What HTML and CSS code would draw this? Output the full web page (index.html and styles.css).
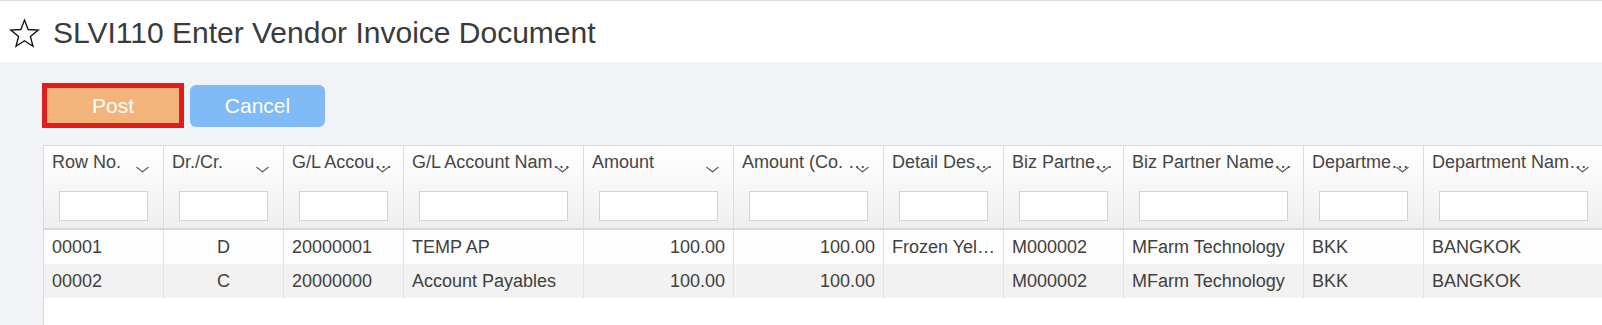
FILE: index.html
```html
<!doctype html>
<html>
<head>
<meta charset="utf-8">
<title>SLVI110 Enter Vendor Invoice Document</title>
<link rel="stylesheet" href="styles.css">
</head>
<body>
<div class="topbar">
  <svg class="star" width="31" height="31" viewBox="0 0 30 30">
    <polygon points="15,2 18.53,11.15 28.31,11.67 20.71,17.85 23.23,27.33 15,22 6.77,27.33 9.29,17.85 1.69,11.67 11.47,11.15" fill="none" stroke="#111" stroke-width="1.3" stroke-linejoin="miter"/>
  </svg>
  <h1>SLVI110 Enter Vendor Invoice Document</h1>
</div>
<div id="content">
  <div class="toolbar">
    <button class="btn btn-post">Post</button>
    <button class="btn btn-cancel">Cancel</button>
  </div>
  <div class="grid">
    <table>
      <colgroup>
        <col style="width:120px"><col style="width:120px"><col style="width:120px">
        <col style="width:180px"><col style="width:150px"><col style="width:150px">
        <col style="width:120px"><col style="width:120px"><col style="width:180px">
        <col style="width:120px"><col style="width:180px">
      </colgroup>
      <thead>
        <tr>
          <th><div class="label">Row No.</div><i class="caret"></i><div class="filter"><input type="text"></div></th>
          <th><div class="label">Dr./Cr.</div><i class="caret"></i><div class="filter"><input type="text"></div></th>
          <th><div class="label">G/L Accou…</div><i class="caret"></i><div class="filter"><input type="text"></div></th>
          <th><div class="label">G/L Account Nam…</div><i class="caret"></i><div class="filter"><input type="text"></div></th>
          <th><div class="label">Amount</div><i class="caret"></i><div class="filter"><input type="text"></div></th>
          <th><div class="label">Amount (Co. …</div><i class="caret"></i><div class="filter"><input type="text"></div></th>
          <th><div class="label">Detail Des…</div><i class="caret"></i><div class="filter"><input type="text"></div></th>
          <th><div class="label">Biz Partne…</div><i class="caret"></i><div class="filter"><input type="text"></div></th>
          <th><div class="label">Biz Partner Name…</div><i class="caret"></i><div class="filter"><input type="text"></div></th>
          <th><div class="label">Departme…</div><i class="caret"></i><div class="filter"><input type="text"></div></th>
          <th><div class="label">Department Nam…</div><i class="caret"></i><div class="filter"><input type="text"></div></th>
        </tr>
      </thead>
      <tbody>
        <tr>
          <td>00001</td><td class="center">D</td><td>20000001</td><td>TEMP AP</td>
          <td class="num">100.00</td><td class="num">100.00</td><td>Frozen Yel…</td>
          <td>M000002</td><td>MFarm Technology</td><td>BKK</td><td>BANGKOK</td>
        </tr>
        <tr>
          <td>00002</td><td class="center">C</td><td>20000000</td><td>Account Payables</td>
          <td class="num">100.00</td><td class="num">100.00</td><td></td>
          <td>M000002</td><td>MFarm Technology</td><td>BKK</td><td>BANGKOK</td>
        </tr>
      </tbody>
    </table>
  </div>
</div>
</body>
</html>
```

FILE: styles.css
```css
html, body {
  margin: 0;
  padding: 0;
  height: 100%;
}
body {
  font-family: "Liberation Sans", Arial, Helvetica, sans-serif;
  background: #f2f3f7;
  color: #404040;
  overflow: hidden;
}
.topbar {
  display: flex;
  align-items: center;
  height: 61px;
  padding-left: 9px;
  background: #fff;
  border-top: 1px solid #dedede;
}
.topbar .star {
  margin-top: 3px;
}
.topbar h1 {
  margin: 3px 0 0 13px;
  font-size: 30px;
  font-weight: normal;
  color: #3a3a3a;
}
#content {
  padding: 21px 0 0 42px;
}
.toolbar {
  display: flex;
  align-items: center;
  gap: 6px;
}
.btn {
  font-family: inherit;
  font-size: 21px;
  color: #fff;
  cursor: pointer;
  padding: 0;
}
.btn-post {
  width: 142px;
  height: 45px;
  border: 5px solid #e31c1c;
  background: #f3b47b;
}
.btn-cancel {
  width: 135px;
  height: 42px;
  border: 0;
  border-radius: 6px;
  background: #80bbf8;
}
.grid {
  margin: 17px 0 0 1px;
  width: 1700px;
  height: 200px;
  background: #fff;
  border: 1px solid #d9d9d9;
  border-right: 0;
}
.grid table {
  table-layout: fixed;
  border-collapse: separate;
  border-spacing: 0;
  width: 1560px;
  font-size: 18px;
}
.grid th {
  position: relative;
  padding: 6px 0 7px 0;
  vertical-align: top;
  text-align: left;
  font-weight: normal;
  color: #454545;
  background: linear-gradient(#ffffff, #efefef);
  border-right: 1px solid #dcdcdc;
  border-bottom: 2px solid #d8d8d8;
}
.grid th .label {
  height: 20px;
  line-height: 20px;
  padding: 0 4px 0 8px;
  white-space: nowrap;
  overflow: hidden;
}
.grid th .caret {
  position: absolute;
  right: 17px;
  top: 18px;
  width: 6px;
  height: 6px;
  border-right: 1.2px solid #555;
  border-bottom: 1.2px solid #555;
  transform: scaleX(1.3) rotate(45deg);
}
.grid th .filter {
  margin-top: 19px;
  padding: 0 15px;
}
.grid th input {
  display: block;
  box-sizing: border-box;
  width: 100%;
  height: 30px;
  margin: 0;
  border: 1px solid #d2d2d2;
  background: #fff;
}
.grid td {
  height: 34px;
  padding: 0 8px;
  white-space: nowrap;
  overflow: hidden;
  border-right: 1px solid #e2e2e2;
  box-sizing: border-box;
}
.grid tbody tr:nth-child(1) td {
  background: #fdfdfd;
}
.grid tbody tr:nth-child(2) td {
  background: #f2f2f2;
}
.grid td.center {
  text-align: center;
}
.grid td.num {
  text-align: right;
}
```
